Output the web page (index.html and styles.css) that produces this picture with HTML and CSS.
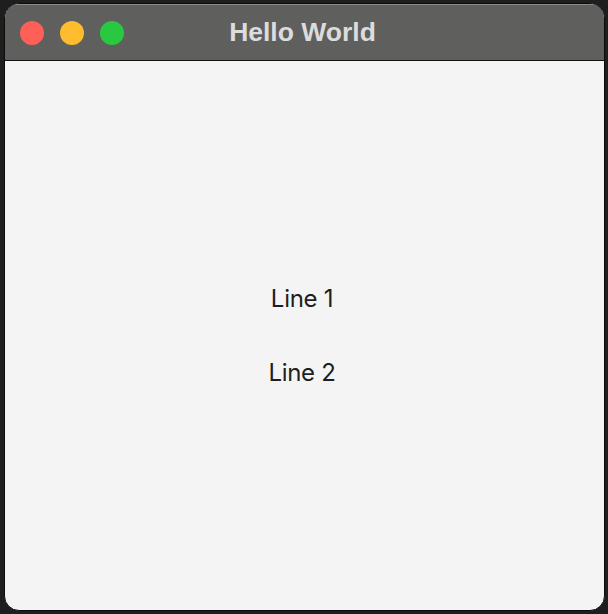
FILE: index.html
```html
<!DOCTYPE html>
<html>
<head>
<meta charset="utf-8">
<link rel="stylesheet" href="styles.css">
</head>
<body>
<div class="window">
  <div class="titlebar">
    <div class="lights">
      <span class="light red"></span>
      <span class="light yellow"></span>
      <span class="light green"></span>
    </div>
    <div class="title">Hello World</div>
  </div>
  <div class="content">
    <div class="line">Line 1</div>
    <div class="line">Line 2</div>
  </div>
</div>
</body>
</html>
```
FILE: styles.css
```css
html, body {
  margin: 0;
  padding: 0;
  background: #1e1e1e;
  width: 608px;
  height: 614px;
  overflow: hidden;
}
body {
  padding: 3px 0 0 4px;
  box-sizing: border-box;
}
.window {
  width: 601px;
  height: 608px;
  box-sizing: border-box;
  border: 1px solid #0c0c0c;
  border-radius: 15px;
  overflow: hidden;
  display: flex;
  flex-direction: column;
  background: #f4f4f4;
}
.titlebar {
  flex: none;
  background: #5f605e;
  border-top: 1px solid #8a8b89;
  border-bottom: 1px solid #111;
  box-sizing: border-box;
  height: 57px;
  position: relative;
  display: flex;
  align-items: center;
}
.lights {
  display: flex;
  gap: 16px;
  padding-left: 15px;
}
.light {
  width: 24px;
  height: 24px;
  border-radius: 50%;
  display: block;
}
.red { background: #fe5f57; }
.yellow { background: #febc2e; }
.green { background: #28c840; }
.title {
  position: absolute;
  left: 0;
  right: 4px;
  top: 12px;
  text-align: center;
  font-family: "Liberation Sans", Arial, sans-serif;
  font-weight: bold;
  font-size: 26.5px;
  color: #dcdcdc;
  line-height: 30px;
}
.content {
  flex: 1;
  display: flex;
  flex-direction: column;
  align-items: center;
  justify-content: center;
  gap: 44px;
  padding-right: 5px;
}
.line {
  font-family: Inter, "Noto Sans", sans-serif;
  font-size: 24px;
  line-height: 30px;
  color: #1e1e1e;
  letter-spacing: -0.3px;
}
```
